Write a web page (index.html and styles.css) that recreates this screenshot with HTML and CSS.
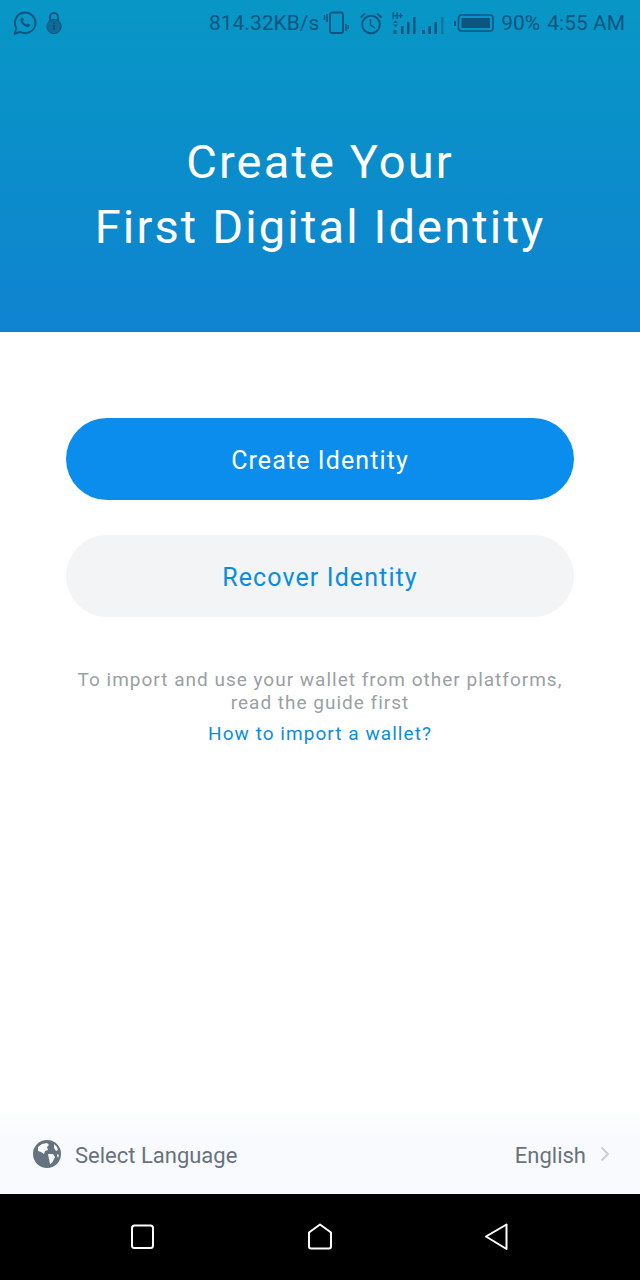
FILE: index.html
```html
<!DOCTYPE html>
<html lang="en">
<head>
    <meta charset="UTF-8">
    <meta name="viewport" content="width=device-width, initial-scale=1.0">
    <title>Create Identity</title>
    <link rel="stylesheet" href="styles.css">
</head>
<body>
    <div class="screen">
        <header class="hero">
            <div class="status-bar">
                <div class="status-left">
                    <svg class="icon-whatsapp" viewBox="0 0 24 24" width="24" height="24">
                        <path d="M1.500 23l1.900-5.700A10.300 10.300 0 1 1 7 20.800z" fill="none" stroke="#0b5580" stroke-width="1.900" stroke-linejoin="round"/>
                        <path d="M8.300 6.800c.6-.6 1.400-.5 1.700.2l.7 1.500c.2.400 0 .8-.3 1.100l-.5.6c.7 1.500 1.800 2.600 3.400 3.400l.7-.7c.3-.3.700-.4 1.100-.2l1.500.8c.6.300.7 1 .2 1.600-.9 1.100-2.200 1.300-3.700.7-2.800-1.100-4.600-3-5.500-5.500-.4-1.300-.1-2.500.7-3.500z" fill="#0b5580"/>
                    </svg>
                    <svg class="icon-lock" viewBox="0 0 16 22" width="16" height="22">
                        <path d="M4 11V5a4 4 0 0 1 8 0V11" fill="none" stroke="#0b5580" stroke-width="1.800"/>
                        <circle cx="8" cy="14.500" r="7.200" fill="#0f6a96" stroke="#0b5580" stroke-width="1"/>
                        <rect x="7.200" y="13" width="1.600" height="5" fill="#0b4f75"/>
                        <rect x="7.200" y="10.700" width="1.600" height="1.500" fill="#0b4f75"/>
                    </svg>
                </div>
                <div class="status-right">
                    <span class="net-speed">814.32KB/s</span>
                    <svg class="icon-vibrate" viewBox="0 0 26 24" width="26" height="24">
                        <rect x="7" y="1.500" width="13" height="20.500" rx="2" fill="none" stroke="#0b5580" stroke-width="1.800"/>
                        <path d="M1.500 4v5M4 3v8M23 13v7M25.300 14v4" stroke="#0b5580" stroke-width="1.500"/>
                    </svg>
                    <svg class="icon-alarm" viewBox="0 0 24 24" width="24" height="24">
                        <circle cx="12" cy="13.500" r="8.800" fill="none" stroke="#0b5580" stroke-width="1.900"/>
                        <path d="M11.500 8v6l4.500 3" fill="none" stroke="#0b5580" stroke-width="1.500"/>
                        <path d="M1.500 6.500L6 2.500M22.500 6.500L18 2.500" stroke="#0b5580" stroke-width="2"/>
                    </svg>
                    <svg class="icon-signal-a" viewBox="0 0 26 24" width="26" height="24">
                        <text class="signal-label" x="0" y="8">H+</text>
                        <path d="M1 12l2.500-2.500L6 12zM1 13.500l2.500 2.500L6 13.500z" fill="#0b5580"/>
                        <rect x="1.500" y="19" width="3" height="4" fill="#0b5580"/>
                        <rect x="9" y="15" width="2.500" height="8" fill="#0b5580"/>
                        <rect x="15" y="11" width="2.500" height="12" fill="#0b5580"/>
                        <rect x="21" y="6" width="2.500" height="17" fill="#0b5580"/>
                    </svg>
                    <svg class="icon-signal-b" viewBox="0 0 22 24" width="22" height="24">
                        <rect x="0" y="19" width="3" height="4" fill="#0b5580"/>
                        <rect x="6.500" y="15" width="2.500" height="8" fill="#0b5580"/>
                        <rect x="12.500" y="11" width="2.500" height="12" fill="#0b5580"/>
                        <rect x="19" y="6" width="2.500" height="17" fill="#0b5580" opacity="0.450"/>
                    </svg>
                    <svg class="icon-battery" viewBox="0 0 40 20" width="40" height="20">
                        <rect x="0" y="8" width="2" height="5" fill="#0b5580"/>
                        <rect x="4.500" y="2" width="34.500" height="16" rx="3" fill="none" stroke="#0b5580" stroke-width="1.600"/>
                        <rect x="7.500" y="5" width="28.500" height="10" fill="#0b5580"/>
                    </svg>
                    <span class="battery-level">90%</span>
                    <span class="clock">4:55 AM</span>
                </div>
            </div>
            <h1 class="hero-title">Create Your<br>First Digital Identity</h1>
        </header>

        <main class="content">
            <div class="btn btn-primary">Create Identity</div>
            <div class="btn btn-secondary">Recover Identity</div>
            <p class="import-note">To import and use your wallet from other platforms,<br>read the guide first</p>
            <a class="import-link">How to import a wallet?</a>
        </main>

        <div class="language-bar">
            <div class="language-left">
                <svg class="icon-globe" viewBox="0 0 28 28" width="28" height="28">
                    <circle cx="14" cy="14" r="14" fill="#65737e"/>
                    <path d="M5 7l4-3 5-1 2 2-2 2 1 3-3 1-1 3-3-2-3-1zM15 14l5 0 2 3-3 6-2 1-1-5zM21 4l3 3 1 3-2 1-2-3zM24 14l2 1-1 3-1-2z" fill="#f8fafc"/>
                </svg>
                <span class="language-label">Select Language</span>
            </div>
            <div class="language-right">
                <span class="language-value">English</span>
                <svg class="icon-chevron" viewBox="0 0 10 16" width="10" height="16">
                    <path d="M1.500 1.500L8 8l-6.500 6.500" fill="none" stroke="#c9cdd1" stroke-width="1.800"/>
                </svg>
            </div>
        </div>

        <nav class="nav-bar">
            <svg viewBox="0 0 24 26" width="24" height="26">
                <rect x="1" y="1.500" width="21" height="22.500" rx="2.500" fill="none" stroke="#fff" stroke-width="2"/>
            </svg>
            <svg viewBox="0 0 24 28" width="24" height="28">
                <path d="M12 1.500L23 9.500V23.500a2 2 0 0 1-2 2H3a2 2 0 0 1-2-2V9.500z" fill="none" stroke="#fff" stroke-width="2" stroke-linejoin="round"/>
            </svg>
            <svg viewBox="0 0 24 28" width="24" height="28">
                <path d="M1 13.500L21.500 1.500V26z" fill="none" stroke="#fff" stroke-width="2" stroke-linejoin="round"/>
            </svg>
        </nav>
    </div>
</body>
</html>
```

FILE: styles.css
```css
* {
    box-sizing: border-box;
}
body {
    margin: 0;
    background-color: white;
    font-family: Roboto, sans-serif;
}
.screen {
    width: 640px;
    height: 1280px;
    display: flex;
    flex-direction: column;
    overflow: hidden;
}

/* Kopfbereich */
.hero {
    height: 332px;
    background: linear-gradient(180deg, #0797c5 0%, #0f83d0 100%);
}
.status-bar {
    height: 44px;
    padding: 2px 15px 0 13px;
    display: flex;
    justify-content: space-between;
    align-items: center;
    color: #0b5580;
    font-size: 21px;
}
.status-left,
.status-right {
    display: flex;
    align-items: center;
}
.status-left {
    gap: 9px;
}
.net-speed {
    margin-right: 4px;
}
.icon-alarm {
    margin-left: 10px;
}
.icon-signal-a {
    margin-left: 9px;
}
.icon-signal-b {
    margin-left: 4px;
}
.icon-battery {
    margin-left: 10px;
}
.battery-level {
    margin-left: 7px;
}
.clock {
    margin-left: 7px;
}
.signal-label {
    font-size: 9px;
    font-weight: 700;
    fill: #0b5580;
    font-family: Roboto, sans-serif;
}
.hero-title {
    margin: 85px 0 0;
    color: white;
    font-size: 47px;
    font-weight: 400;
    line-height: 65px;
    letter-spacing: 2.150px;
    text-align: center;
}

/* Buttons */
.content {
    flex: 1;
    padding: 86px 66px 0;
    display: flex;
    flex-direction: column;
    align-items: center;
}
.btn {
    width: 100%;
    height: 82px;
    padding-top: 2px;
    border-radius: 41px;
    display: flex;
    justify-content: center;
    align-items: center;
    font-size: 25px;
    letter-spacing: 1.100px;
}
.btn-primary {
    background-color: #0a8dec;
    color: white;
}
.btn-secondary {
    margin-top: 35px;
    background-color: #f2f4f5;
    color: #0a8de0;
}
.import-note {
    margin: 51px -10px 0;
    color: #9a9fa4;
    font-size: 19px;
    line-height: 23px;
    letter-spacing: 1px;
    text-align: center;
    white-space: nowrap;
}
.import-link {
    margin-top: 8px;
    color: #0a8de0;
    font-size: 19px;
    line-height: 23px;
    letter-spacing: 1.050px;
}

/* Sprache */
.language-bar {
    height: 81px;
    padding: 4px 30px 0 33px;
    background: linear-gradient(180deg, #fdfefe 0%, #f8fafd 30%);
    display: flex;
    justify-content: space-between;
    align-items: center;
    color: #68727b;
    font-size: 22px;
}
.language-left,
.language-right {
    display: flex;
    align-items: center;
}
.language-left {
    gap: 14px;
}
.language-right {
    gap: 14px;
}
.icon-globe,
.icon-chevron {
    margin-top: -3px;
}

.nav-bar {
    height: 86px;
    padding: 0 131px;
    background-color: black;
    display: flex;
    justify-content: space-between;
    align-items: center;
}
```
